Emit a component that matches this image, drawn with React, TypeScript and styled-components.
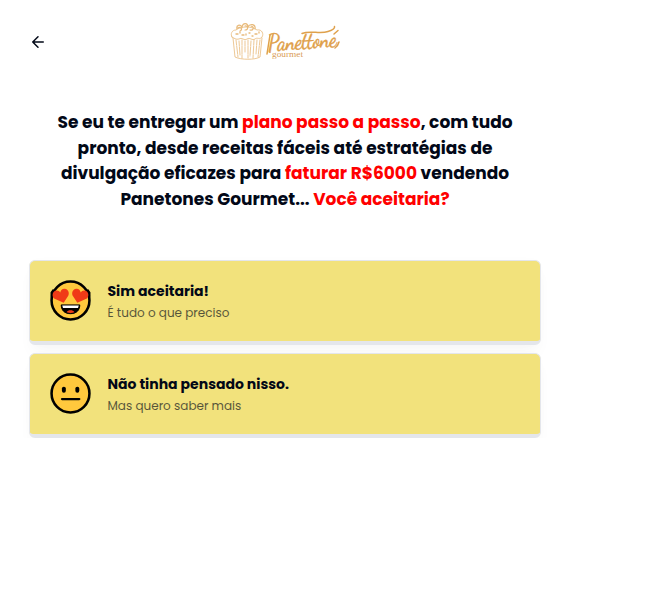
import React from "react";
import styled, { createGlobalStyle } from "styled-components";

const GlobalStyle = createGlobalStyle`
  * { box-sizing: border-box; }
  body {
    margin: 0;
    background: #fff;
    color: #020817;
    font-family: Poppins, Inter, sans-serif;
  }
`;

const Page = styled.main`
  width: 512px;
  margin-left: 29px;
  padding-top: 18px;
`;

const Header = styled.header`
  display: grid;
  grid-template-columns: 40px 1fr 40px;
  align-items: center;
  height: 48px;
`;

const BackButton = styled.button`
  display: flex;
  padding: 0;
  border: 0;
  background: none;
  color: #020817;
`;

const Logo = styled.svg`
  display: block;
  justify-self: center;
  overflow: visible;
`;

const Title = styled.h1`
  margin: 44px 0 0;
  font-size: 17px;
  font-weight: 700;
  line-height: 25.5px;
  text-align: center;
`;

const Line = styled.span`
  display: block;
  white-space: nowrap;
`;

const Highlight = styled.span`
  color: #ff0000;
`;

const Options = styled.div`
  display: flex;
  flex-direction: column;
  gap: 8px;
  margin-top: 48px;
`;

const Option = styled.button`
  display: flex;
  align-items: center;
  gap: 16px;
  width: 100%;
  height: 85px;
  padding: 0 20px;
  border: 1px solid #e4e6eb;
  border-bottom-width: 4px;
  border-radius: 6px;
  background: #f2e27c;
  color: #020817;
  font: inherit;
  text-align: left;
  box-shadow: 0 10px 15px -3px rgba(0, 0, 0, 0.035), 0 0 12px rgba(0, 0, 0, 0.012);
`;

const Face = styled.svg`
  flex: none;
  display: block;
  margin: -2px 0.5px 0 0;
`;

const Labels = styled.span`
  display: flex;
  flex-direction: column;
`;

const Label = styled.span`
  font-size: 14px;
  font-weight: 700;
  line-height: 22px;
`;

const Hint = styled.span`
  font-size: 12px;
  font-weight: 400;
  line-height: 21px;
  opacity: 0.65;
`;

const PanettoneLogo = () => (
  <Logo width="110" height="40" viewBox="0 0 110 40" fill="none" stroke="#e3aa5b" strokeLinecap="round">
    <g strokeWidth="0.8" opacity="0.8">
      <path d="M2 15C0 12 2 8 6 8C10 4 22 4 27 8C32 7 34 12 32 15C30 18 27 15 25 17C22 19 20 15 17 17C14 19 12 15 9 17C6 18 4 16 2 15Z" />
      <path d="M3 16L5 35C11 38 25 38 30 35L32 16" />
      <path d="M7 7C6 3 10 2 12 5C13 0 18 1 18 5C20 1 26 2 25 7M8 6C11 4 13 8 10 9M15 4C18 3 19 8 15 8M21 4C25 5 23 9 20 8" strokeWidth="1.2" />
      <path d="M6 18L8 35M9 19L10 33M12 18L12 36M15 19V30M18 18V36M21 19L20 34M24 18L23 36M27 18L26 32M30 18L28 35" strokeDasharray="5 1 8 1" />
      <path d="M6 12H8M12 13H14M19 11H20M25 12H27M29 10V11M10 10V11M16 12V13M22 14H23" strokeWidth="1.3" />
    </g>
    <text
      transform="translate(38 29) rotate(-4) scale(0.82 1)"
      fill="#dfa14c"
      stroke="#dfa14c"
      strokeWidth="0.3"
      fontFamily="'Dancing Script', Caveat, 'Liberation Serif', cursive"
      fontWeight="700"
      fontSize="24.5"
      textLength="84"
      lengthAdjust="spacing"
    >
      Panettone
    </text>
    <path d="M72 11.5C80 8 90 12.5 98 9.5C103 8 105 6.5 104.5 4.5M104 12L108 8.5M40 13L37 32M105 26Q108 24 109 20" stroke="#dfa14c" strokeWidth="1.5" />
    <text x="42" y="35" fill="#d99c56" stroke="none" fontFamily="'Liberation Serif', serif" fontSize="7.5" textLength="31" lengthAdjust="spacingAndGlyphs">
      gourmet
    </text>
  </Logo>
);

const FaceBase = () => <circle cx="21" cy="21" r="19.4" fill="#ffc83d" stroke="#000" strokeWidth="2.6" />;

const HeartEyes = () => (
  <Face width="41" height="41" viewBox="0 0 42 42">
    <FaceBase />
    <path d="M1.8 17V13L4 10M40.2 17V13L38 10" fill="none" stroke="#000" strokeWidth="2.5" />
    <path d="M14 23.3L4.2 19C1.5 16.5 2.5 11 6.8 10.8C8.5 10.7 9.8 11.6 10.5 12.8C11 10.3 12.7 8.8 15 9C19.3 9.5 20.3 14 18.2 17Z" fill="#f03a17" />
    <path d="M28 23.3L37.8 19C40.5 16.5 39.5 11 35.2 10.8C33.5 10.7 32.2 11.6 31.5 12.8C31 10.3 29.3 8.8 27 9C22.7 9.5 21.7 14 23.8 17Z" fill="#f03a17" />
    <path d="M11.5 25.5H30.5C30.5 31 27 34.5 21 34.5S11.5 31 11.5 25.5Z" fill="#000" stroke="#000" />
    <path d="M12.5 26H29.5L28.7 28.8H13.3Z" fill="#fff" />
    <path d="M17 33C18.5 30.4 23.5 30.4 25 33Q21 34.5 17 33Z" fill="#f03a17" />
  </Face>
);

const NeutralFace = () => (
  <Face width="41" height="41" viewBox="0 0 42 42">
    <FaceBase />
    <rect x="12.2" y="14" width="4" height="6.2" rx="1.9" />
    <rect x="26" y="14" width="4" height="6.2" rx="1.9" />
    <path d="M12.3 26.7H30" stroke="#000" strokeWidth="2.3" strokeLinecap="round" />
  </Face>
);

export default function App() {
  return (
    <>
      <GlobalStyle />
      <Page>
        <Header>
          <BackButton aria-label="Voltar">
            <svg width="18" height="18" viewBox="0 0 24 24" fill="none" stroke="currentColor" strokeWidth="2" strokeLinecap="round" strokeLinejoin="round">
              <path d="m12 19-7-7 7-7M19 12H5" />
            </svg>
          </BackButton>
          <PanettoneLogo />
        </Header>
        <Title>
          <Line>
            Se eu te entregar um <Highlight>plano passo a passo</Highlight>, com tudo
          </Line>
          <Line>pronto, desde receitas fáceis até estratégias de</Line>
          <Line>
            divulgação eficazes para <Highlight>faturar R$6000</Highlight> vendendo
          </Line>
          <Line>
            Panetones Gourmet... <Highlight>Você aceitaria?</Highlight>
          </Line>
        </Title>
        <Options>
          <Option>
            <HeartEyes />
            <Labels>
              <Label>Sim aceitaria!</Label>
              <Hint>É tudo o que preciso</Hint>
            </Labels>
          </Option>
          <Option>
            <NeutralFace />
            <Labels>
              <Label>Não tinha pensado nisso.</Label>
              <Hint>Mas quero saber mais</Hint>
            </Labels>
          </Option>
        </Options>
      </Page>
    </>
  );
}
